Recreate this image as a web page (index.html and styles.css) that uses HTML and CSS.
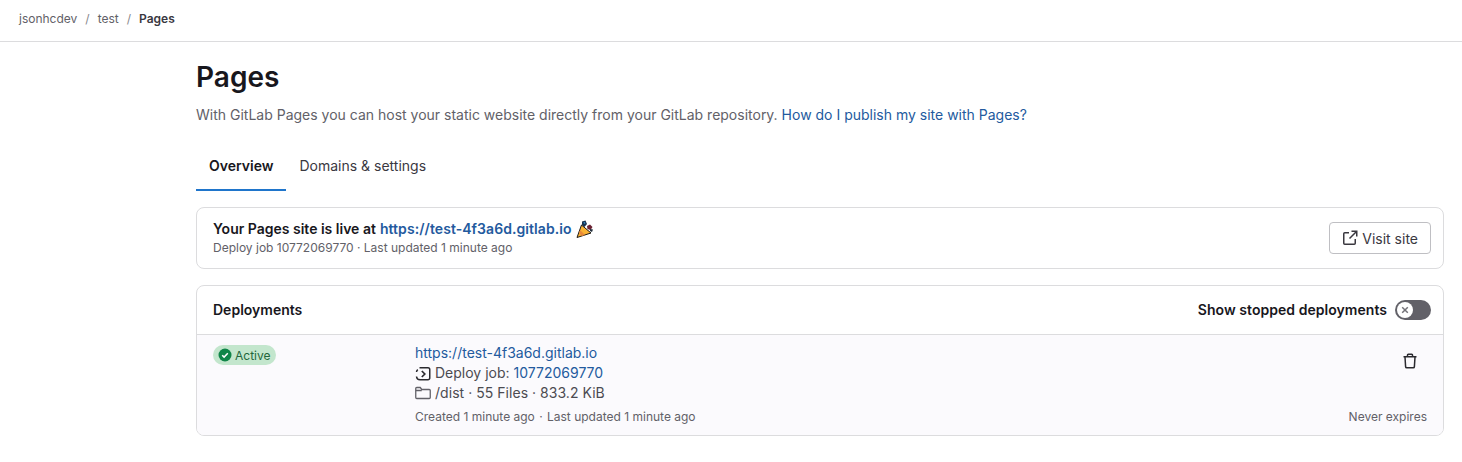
FILE: index.html
```html
<!DOCTYPE html>
<html lang="en">
  <head>
    <title>Pages</title>
    <meta charset="UTF-8" />
    <link rel="stylesheet" href="styles.css">
  </head>
  <body>
    <nav class="topbar">
      <a class="crumb">jsonhcdev</a>
      <span class="sep">/</span>
      <a class="crumb">test</a>
      <span class="sep">/</span>
      <a class="crumb current">Pages</a>
    </nav>

    <main class="content">
      <h1>Pages</h1>
      <p class="intro">With GitLab Pages you can host your static website directly from your GitLab repository. <a href="#">How do I publish my site with Pages?</a></p>

      <div class="tabs">
        <a class="tab active">Overview</a>
        <a class="tab">Domains &amp; settings</a>
      </div>

      <section class="card live">
        <div>
          <div class="live-title">
            Your Pages site is live at <a href="#">https://test-4f3a6d.gitlab.io</a>
            <svg class="tada" width="18" height="18" viewBox="0 0 18 18">
              <path d="M5.5 5 L15 13 L1 17.5 Z" fill="#f9b233" stroke="#1d1b16" stroke-width="1" />
              <path d="M4 10 L9 15 L6 16 L3 13 Z" fill="#e8873a" />
              <path d="M6 1.5 L9.5 0.5 L11 4 L8.5 7 L6 5 Z" fill="#17324f" />
              <path d="M7.5 2 L9 2 L9.5 3.5 L8 4 Z" fill="#2f7fb8" />
              <path d="M11 6 L14 4.5 L16.5 7 L14.5 10 L11.5 9 Z" fill="#6b2233" />
              <path d="M14 9 L17 9.5 L16 12 L14 11 Z" fill="#22303d" />
            </svg>
          </div>
          <div class="live-meta">Deploy job <a href="#">10772069770</a> · Last updated 1 minute ago</div>
        </div>
        <a class="btn">
          <svg width="16" height="16" viewBox="0 0 16 16" fill="none" stroke="#3a383f" stroke-width="1.5">
            <path d="M7 2.75H2.75a1 1 0 0 0-1 1v9.5a1 1 0 0 0 1 1h9.5a1 1 0 0 0 1-1V9" />
            <path d="M9.5 1.25h5.25V6.5M14.5 1.5L7.5 8.5" />
          </svg>
          Visit site
        </a>
      </section>

      <section class="card deployments">
        <header class="card-head">
          <strong>Deployments</strong>
          <div class="toggle-wrap">
            <strong>Show stopped deployments</strong>
            <span class="toggle">
              <span class="knob">
                <svg width="8" height="8" viewBox="0 0 8 8" stroke="#737278" stroke-width="1.5">
                  <path d="M1.2 1.2L6.8 6.8M6.8 1.2L1.2 6.8" />
                </svg>
              </span>
            </span>
          </div>
        </header>
        <div class="row">
          <div class="status">
            <span class="badge">
              <svg width="14" height="14" viewBox="0 0 14 14">
                <circle cx="7" cy="7" r="6.5" fill="#108548" />
                <path d="M4.2 7.2L6.1 9.1L9.8 5.3" fill="none" stroke="#fff" stroke-width="1.5" />
              </svg>
              Active
            </span>
          </div>
          <div class="details">
            <a class="site-url" href="#">https://test-4f3a6d.gitlab.io</a>
            <div class="line">
              <svg class="job-icon" width="16" height="16" viewBox="0 0 16 16" fill="none" stroke="#2b2a2f" stroke-width="1.5">
                <path d="M4.5 1.75H13a1.75 1.75 0 0 1 1.75 1.75v8.5a1.75 1.75 0 0 1-1.75 1.75H5A3.6 3.6 0 0 1 1.5 10.5" />
                <path d="M1.5 6A3.6 3.6 0 0 1 2.8 3.6" />
                <path d="M6.8 5L9.8 8L6.8 11" stroke-width="1.7" />
              </svg>
              Deploy job: <a href="#">10772069770</a>
            </div>
            <div class="line stats">
              <svg width="16" height="16" viewBox="0 0 16 16" fill="none" stroke="#626168" stroke-width="1.3">
                <path d="M.75 3.5a1 1 0 0 1 1-1h3.5l1.5 2h7.5a1 1 0 0 1 1 1v7a1 1 0 0 1-1 1H1.75a1 1 0 0 1-1-1z" />
                <path d="M.75 5.5h6" />
              </svg>
              /dist · 55 Files · 833.2 KiB
            </div>
            <div class="small">Created 1 minute ago <span class="dot">·</span> Last updated 1 minute ago</div>
          </div>
          <div class="actions">
            <svg class="trash" width="16" height="16" viewBox="0 0 16 16" fill="none" stroke="#2b2a2f" stroke-width="1.5">
              <path d="M1.5 3.75h13M5.5 3.5V2a.75.75 0 0 1 .75-.75h3.5A.75.75 0 0 1 10.5 2v1.5" />
              <path d="M3 4l.6 9.6a1.2 1.2 0 0 0 1.2 1.15h6.4a1.2 1.2 0 0 0 1.2-1.15L13 4" />
            </svg>
            <div class="small">Never expires</div>
          </div>
        </div>
      </section>
    </main>
  </body>
</html>
```

FILE: styles.css
```css
body {
  font-family: Inter, "Noto Sans", sans-serif;
  font-size: 14px;
  color: #3a383f;
  background-color: #fff;
  margin: 0;
}
a {
  color: #235a9e;
  text-decoration: none;
}
.topbar {
  height: 42px;
  border-bottom: 1px solid #dcdcde;
  display: flex;
  align-items: center;
  padding: 0 19px 4px;
  box-sizing: border-box;
  font-size: 12px;
  gap: 8px;
}
.crumb {
  color: #626168;
}
.crumb.current {
  color: #3a383f;
  font-weight: 600;
}
.sep {
  color: #89888d;
}
.content {
  margin-left: 196px;
  width: 1248px;
}
h1 {
  font-size: 28px;
  line-height: 36px;
  font-weight: 600;
  color: #18171d;
  margin: 17px 0 0;
}
.intro {
  color: #626168;
  margin: 10px 0 0;
  line-height: 20px;
}
.tabs {
  display: flex;
  margin-top: 16px;
}
.tab {
  padding: 0 13px;
  height: 50px;
  line-height: 50px;
  color: #3a383f;
  box-sizing: border-box;
}
.tab.active {
  color: #18171d;
  font-weight: 600;
  border-bottom: 2px solid #1f75cb;
}
.card {
  border: 1px solid #dcdcde;
  border-radius: 8px;
  background: #fff;
}
.live {
  margin-top: 16px;
  height: 62px;
  box-sizing: border-box;
  display: flex;
  justify-content: space-between;
  align-items: center;
  padding: 0 12px 0 16px;
}
.live-title {
  font-weight: 600;
  color: #18171d;
  line-height: 20px;
  display: flex;
  align-items: center;
  gap: 4px;
}
.live-title a {
  letter-spacing: 0.06px;
}
.tada {
  margin-left: 0;
}
.live-meta,
.small {
  font-size: 12px;
  color: #626168;
}
.live-meta {
  line-height: 18px;
}
.live-meta a {
  color: #626168;
}
.btn {
  display: flex;
  align-items: center;
  gap: 4px;
  height: 32px;
  padding: 0 12px;
  box-sizing: border-box;
  border: 1px solid #bfbfc3;
  border-radius: 4px;
  color: #3a383f;
}
.deployments {
  margin-top: 16px;
  height: 151px;
  box-sizing: border-box;
  overflow: hidden;
}
.card-head {
  height: 49px;
  box-sizing: border-box;
  border-bottom: 1px solid #dcdcde;
  display: flex;
  justify-content: space-between;
  align-items: center;
  padding: 0 12px 0 16px;
  color: #18171d;
}
.card-head strong {
  font-weight: 600;
  padding-bottom: 2px;
}
.toggle-wrap {
  display: flex;
  align-items: center;
  gap: 8px;
}
.toggle-wrap strong {
  letter-spacing: 0.04px;
}
.toggle {
  width: 36px;
  height: 20px;
  border-radius: 10px;
  background: #626168;
  display: flex;
  align-items: center;
  padding-left: 2px;
  box-sizing: border-box;
}
.knob {
  width: 16px;
  height: 16px;
  border-radius: 50%;
  background: #fff;
  display: flex;
  align-items: center;
  justify-content: center;
}
.row {
  background: #fbfafd;
  display: flex;
  height: 100px;
  padding: 8px 16px 0;
}
.status {
  width: 202px;
}
.badge {
  display: inline-flex;
  align-items: center;
  gap: 3px;
  height: 20px;
  margin-top: 2px;
  padding: 0 6px 0 5px;
  border-radius: 10px;
  background: #c3e6cd;
  color: #24663b;
  font-size: 12px;
}
.details {
  flex: 1;
  line-height: 20px;
}
.line {
  display: flex;
  align-items: center;
  gap: 4px;
  color: #4c4b51;
}
.job-icon {
  margin-top: 2px;
}
.stats {
  letter-spacing: 0.04px;
}
.details .small {
  margin-top: 5px;
  line-height: 18px;
}
.dot {
  margin: 0 1px;
}
.actions {
  display: flex;
  flex-direction: column;
  align-items: flex-end;
  justify-content: space-between;
  height: 83px;
}
.actions .small {
  line-height: 18px;
}
.trash {
  margin: 10px 9px 0 0;
}
```
